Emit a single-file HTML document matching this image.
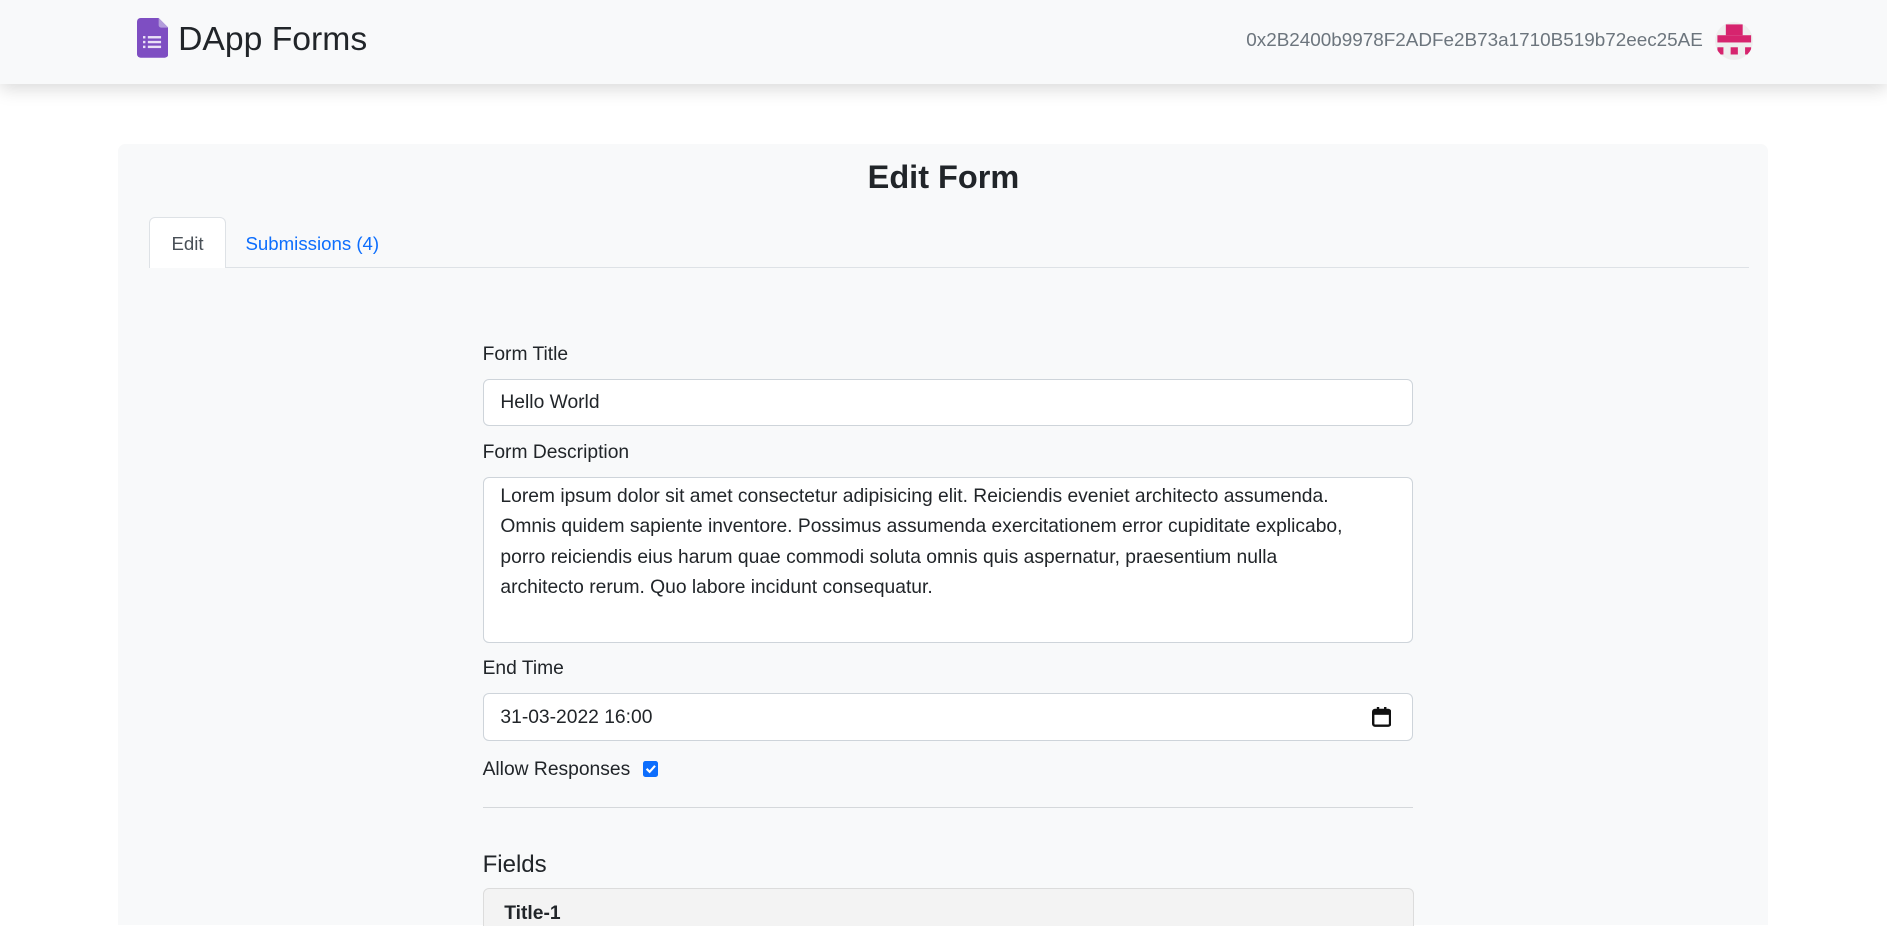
<!DOCTYPE html>
<html><head><meta charset="utf-8"><style>
html{zoom:1.2034;overflow:hidden;height:769px}
body{margin:0;width:1568px;height:769px;overflow:hidden;background:#fff;font-family:"Liberation Sans",sans-serif;color:#212529;position:relative}
.nav{position:absolute;left:0;top:0;width:1568px;height:70px;background:#f8f9fa;box-shadow:0 4px 14px rgba(0,0,0,.15);z-index:2}
.brand{position:absolute;left:114px;top:15px;display:flex;align-items:center;font-size:28px;}
.addr{position:absolute;right:153px;top:25px;font-size:15.7px;color:#6c757d}
.av{position:absolute;left:1425px;top:18px;width:32px;height:32px;border-radius:50%;background:#eeeeee;overflow:hidden}
.card{position:absolute;left:98px;top:120px;width:1371px;height:649px;background:#f8f9fa;border-radius:6px 6px 0 0}
h1{position:absolute;left:0;right:0;top:132px;margin:0;text-align:center;font-size:27px;font-weight:bold}
.tabline{position:absolute;left:124px;top:222px;width:1329px;border-top:1px solid #dee2e6}
.tab1{position:absolute;left:124px;top:180px;width:62px;height:42px;background:#fff;border:1px solid #dee2e6;border-bottom:none;border-radius:5px 5px 0 0;font-size:15.5px;text-align:center;line-height:44px;color:#495057}
.tab2{position:absolute;left:204px;top:194px;font-size:15.5px;color:#0d6efd}
.lbl{position:absolute;left:401px;font-size:16px}
.in{position:absolute;left:401px;width:773px;background:#fff;border:1px solid #ced4da;border-radius:5px;font-size:16px;box-sizing:border-box;padding:0 14px}
.ta{line-height:25px;padding-top:4px;white-space:nowrap}
hr{position:absolute;left:401px;top:671px;width:773px;margin:0;border:0;border-top:1px solid #d5d8db}
</style></head><body>
<div class="nav">
<div class="brand"><svg width="26" height="33" viewBox="0 0 26 33"><path d="M3 0h15l8 8v22a3 3 0 0 1-3 3H3a3 3 0 0 1-3-3V3a3 3 0 0 1 3-3z" fill="#7e4ec2"/><path d="M18 0l8 8h-6a2 2 0 0 1-2-2z" fill="#b39ddb"/><g fill="#e9e0f7"><rect x="5" y="15" width="2" height="2"/><rect x="9" y="15" width="11" height="2"/><rect x="5" y="19" width="2" height="2"/><rect x="9" y="19" width="11" height="2"/><rect x="5" y="23" width="2" height="2"/><rect x="9" y="23" width="11" height="2"/></g></svg><span style="margin-left:8px;position:relative;top:2px">DApp Forms</span></div>
<div class="addr">0x2B2400b9978F2ADFe2B73a1710B519b72eec25AE</div>
<div class="av"><svg width="32" height="32"><g fill="#d6246e"><rect x="9" y="2" width="14" height="9"/><rect x="2" y="11" width="28" height="6"/><rect x="2" y="21" width="5" height="6"/><rect x="13" y="21" width="6" height="6"/><rect x="25" y="21" width="5" height="6"/></g></svg></div>
</div>
<div class="card"></div>
<h1>Edit Form</h1>
<div class="tabline"></div>
<div class="tab1">Edit</div>
<div class="tab2">Submissions (4)</div>
<div class="lbl" style="top:286px">Form Title</div>
<div class="in" style="top:315px;height:39px;line-height:39px">Hello World</div>
<div class="lbl" style="top:367px">Form Description</div>
<div class="in ta" style="top:396px;height:138px">Lorem ipsum dolor sit amet consectetur adipisicing elit. Reiciendis eveniet architecto assumenda.<br>Omnis quidem sapiente inventore. Possimus assumenda exercitationem error cupiditate explicabo,<br>porro reiciendis eius harum quae commodi soluta omnis quis aspernatur, praesentium nulla<br>architecto rerum. Quo labore incidunt consequatur.</div>
<div class="lbl" style="top:547px">End Time</div>
<div class="in" style="top:576px;height:40px;line-height:40px">31-03-2022 16:00<svg style="position:absolute;right:17px;top:11px" width="16" height="17" viewBox="0 0 16 17"><rect x="1" y="2.5" width="14" height="13" rx="1.5" fill="none" stroke="#111" stroke-width="2"/><rect x="1" y="2.5" width="14" height="4" fill="#111"/><rect x="4" y="0" width="2" height="3" fill="#111"/><rect x="10" y="0" width="2" height="3" fill="#111"/></svg></div>
<div class="lbl" style="top:631px">Allow Responses <span style="display:inline-block;width:13px;height:13px;background:#0d6efd;border-radius:2px;vertical-align:-1px;margin-left:6px;position:relative"><svg style="position:absolute;left:0;top:0" width="13" height="13"><path d="M3 6.5l2.5 2.5 4.5-5" fill="none" stroke="#fff" stroke-width="1.8"/></svg></span></div>
<hr>
<div style="position:absolute;left:401px;top:707px;font-size:20px;font-weight:500">Fields</div>
<div style="position:absolute;left:401px;top:738px;width:772px;height:60px;background:#f3f3f3;border:1px solid #dcdcdc;border-radius:5px"></div>
<div style="position:absolute;left:419px;top:750px;font-size:16px;font-weight:bold">Title-1</div>
</body></html>
